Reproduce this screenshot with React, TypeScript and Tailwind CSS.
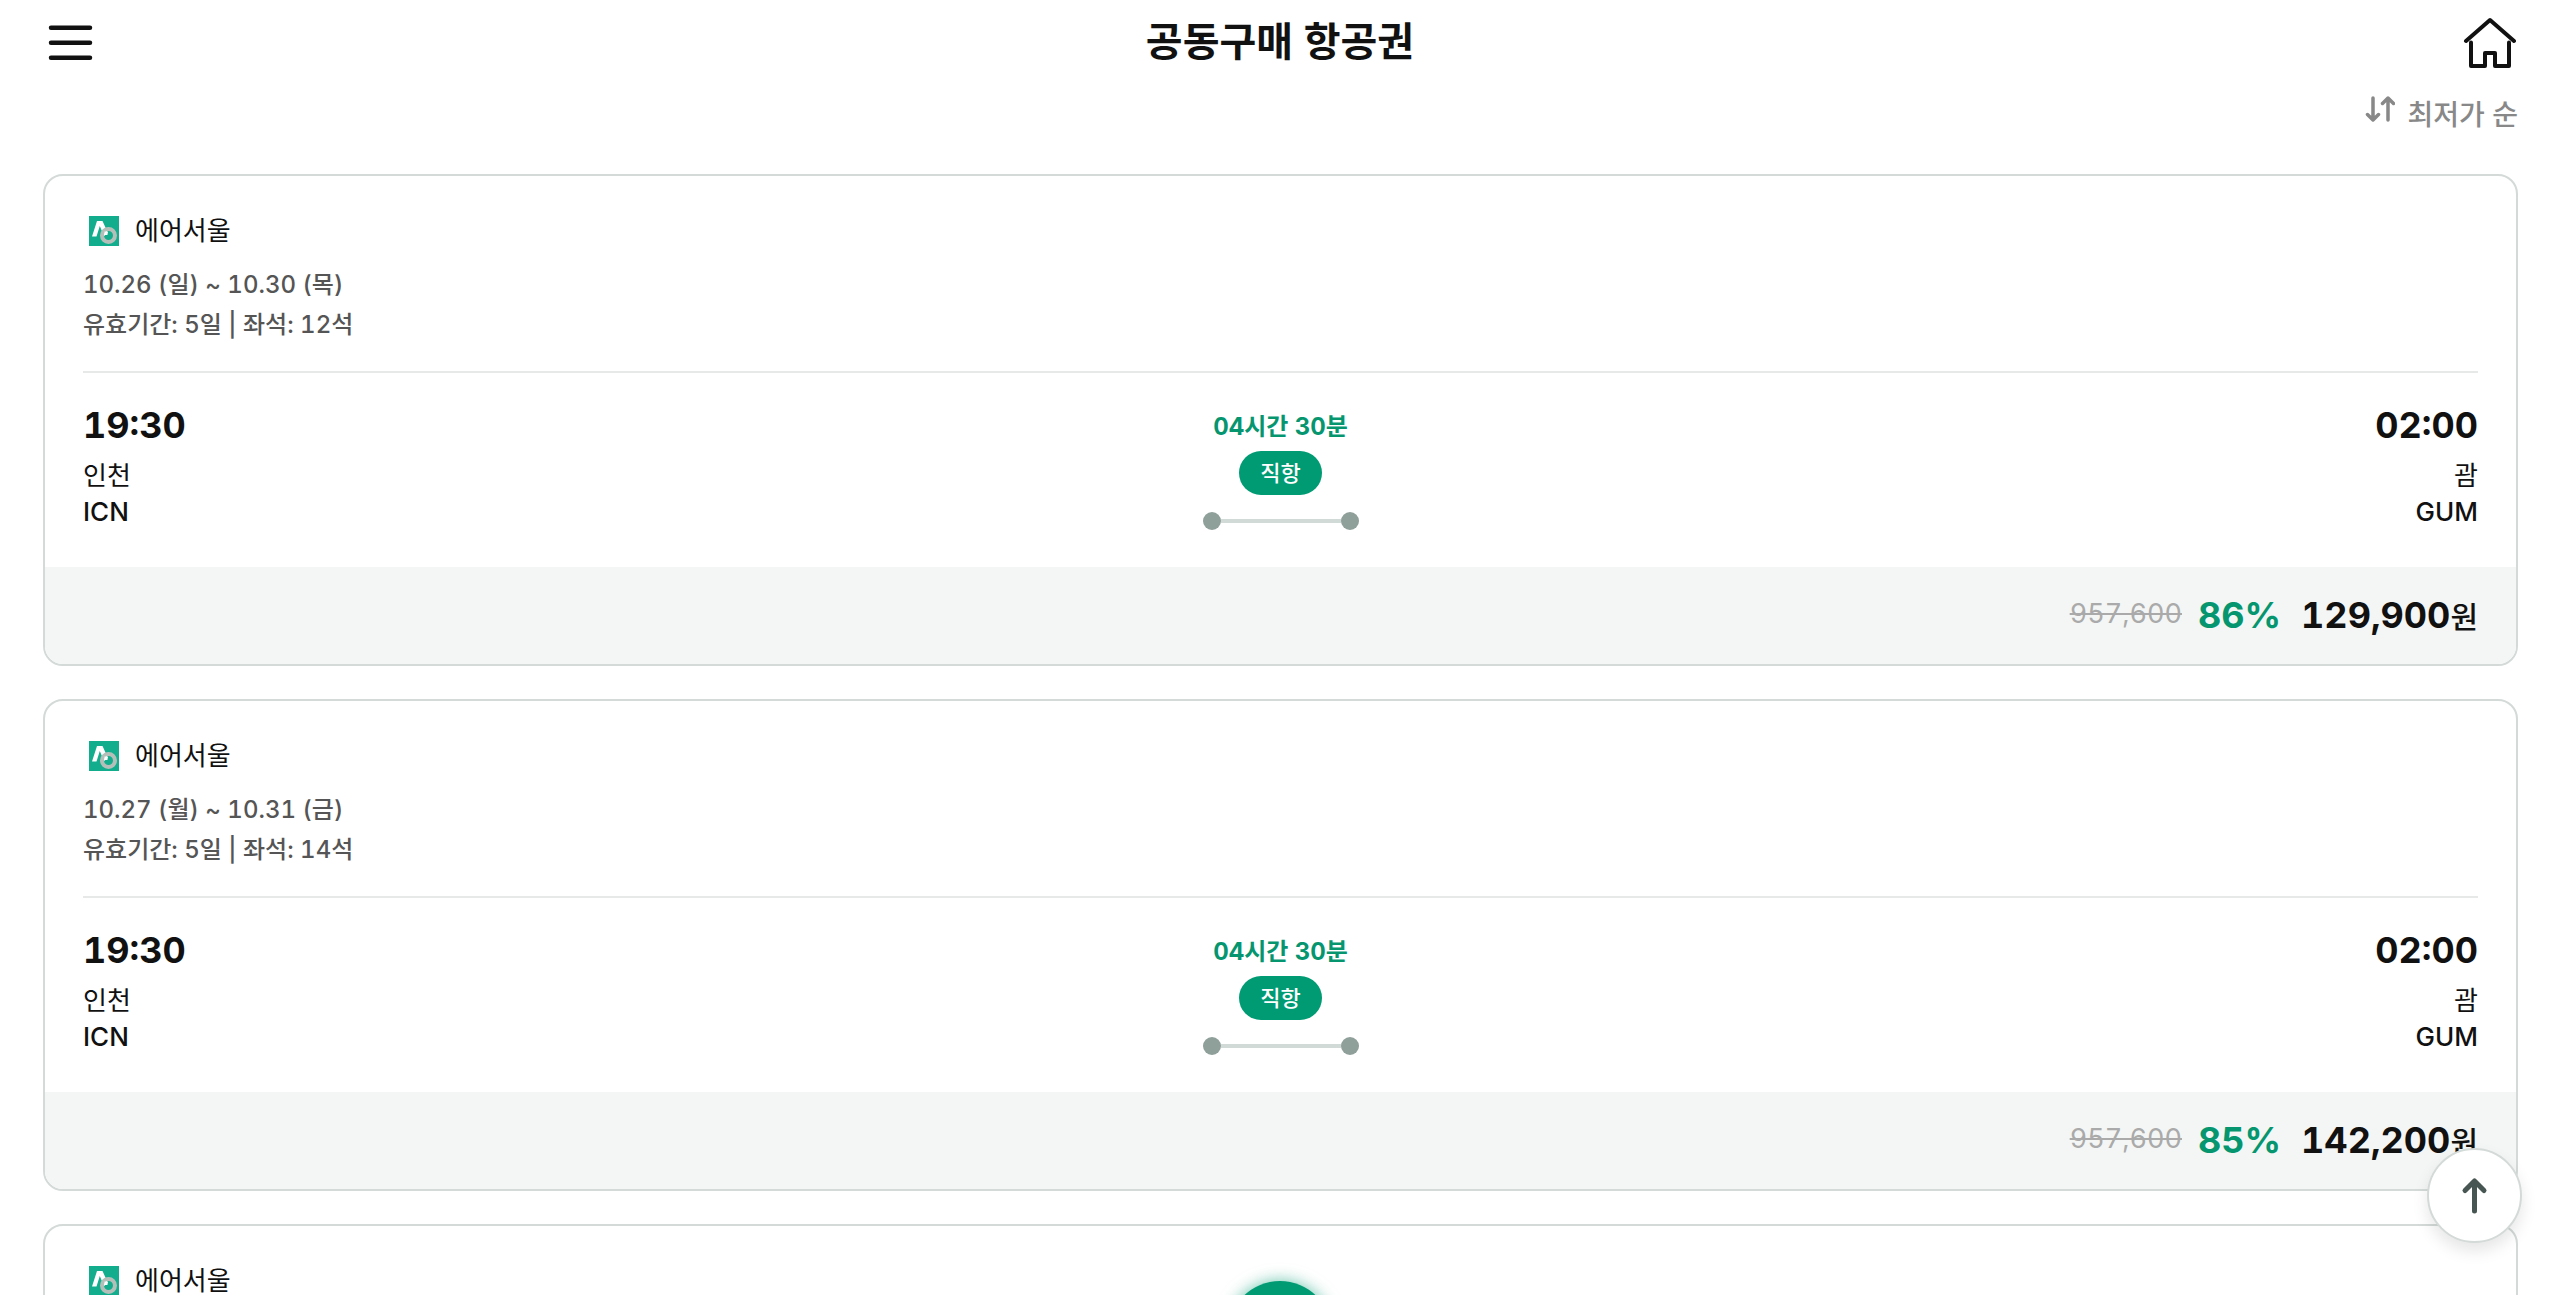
const flights = [
  {
    id: 1,
    airline: '에어서울',
    period: '10.26 (일) ~ 10.30 (목)',
    info: '유효기간: 5일 | 좌석: 12석',
    original: '957,600',
    rate: '86%',
    price: '129,900',
  },
  {
    id: 2,
    airline: '에어서울',
    period: '10.27 (월) ~ 10.31 (금)',
    info: '유효기간: 5일 | 좌석: 14석',
    original: '957,600',
    rate: '85%',
    price: '142,200',
  },
  {
    id: 3,
    airline: '에어서울',
    period: '10.28 (화) ~ 11.01 (토)',
    info: '유효기간: 5일 | 좌석: 14석',
    original: '957,600',
    rate: '85%',
    price: '142,200',
  },
]

type Flight = (typeof flights)[number]

function AirSeoulLogo() {
  return (
    <svg width="30" height="30" viewBox="0 0 30 30" aria-hidden="true">
      <rect width="30" height="30" fill="#12ad8d" />
      <path d="M3 20.500 8 5h5.500L19 17l-4 3-4.200-10L7.500 20.500z" fill="#fff" />
      <circle cx="19.500" cy="19.500" r="6.500" fill="none" stroke="#b4bfba" strokeWidth="4" />
      <path d="M15.500 15.500h3v3.500h-3z" fill="#fff" />
    </svg>
  )
}

function Header() {
  return (
    <header className="grid h-[84px] grid-cols-3 items-center px-11">
      <button aria-label="메뉴" className="justify-self-start">
        <svg width="54" height="54" viewBox="0 0 54 54" fill="none" stroke="#111" strokeWidth="4.500" strokeLinecap="round">
          <path d="M7 12.700h39M7 27.700h39M7 42.700h39" />
        </svg>
      </button>
      <h1 className="justify-self-center text-[40px] leading-none font-bold">공동구매 항공권</h1>
      <a href="#home" aria-label="홈" className="justify-self-end">
        <svg width="54" height="54" viewBox="0 0 54 54" fill="none" stroke="#111" strokeWidth="4" strokeLinecap="round" strokeLinejoin="round">
          <path d="M4 26 28 5 52 26" />
          <path d="M9 27.500V51H23V38h10v13h14V27.500" />
        </svg>
      </a>
    </header>
  )
}

function FlightCard({ flight }: { flight: Flight }) {
  return (
    <article className="overflow-hidden rounded-[20px] border-2 border-[#d3dad8] bg-white">
      <div className="px-[38px] pt-9 pb-[37px]">
        <div className="flex h-[38px] items-center gap-4 pl-[6px]">
          <AirSeoulLogo />
          <span className="text-[26px] leading-none">{flight.airline}</span>
        </div>
        <div className="mt-[15px] text-2xl leading-10 font-medium text-[#555]">
          <p>{flight.period}</p>
          <p>{flight.info}</p>
        </div>
        <div className="mt-[26px] flex items-start justify-between border-t-2 border-[#e6e9e8] pt-7">
          <div className="flex-1">
            <p className="text-4xl leading-[48px] font-bold">19:30</p>
            <p className="mt-[9px] text-[26px] leading-9">인천</p>
            <p className="text-[26px] leading-9 font-medium">ICN</p>
          </div>
          <div className="flex flex-col items-center pt-[2px]">
            <p className="text-2xl leading-[48px] font-bold text-[#05966f]">04시간 30분</p>
            <span className="flex h-11 items-center rounded-full bg-[#009b73] px-[21px] text-[22px] leading-none font-medium text-white">
              직항
            </span>
            <div className="mt-[17px] flex items-center">
              <span className="h-[18px] w-[18px] rounded-full bg-[#8f9f9a]" />
              <span className="h-1 w-[120px] bg-[#d1dad7]" />
              <span className="h-[18px] w-[18px] rounded-full bg-[#8f9f9a]" />
            </div>
          </div>
          <div className="flex-1 text-right">
            <p className="text-4xl leading-[48px] font-bold">02:00</p>
            <p className="mt-[9px] text-[26px] leading-9">괌</p>
            <p className="text-[26px] leading-9 font-medium">GUM</p>
          </div>
        </div>
      </div>
      <div className="flex h-[97px] items-center justify-end bg-[#f4f6f5] px-[38px] pb-[2px]">
        <del className="text-[27px] text-[#aaa]">{flight.original}</del>
        <span className="ml-4 text-4xl font-bold text-[#05966f]">{flight.rate}</span>
        <span className="ml-5 text-4xl font-bold">
          {flight.price}
          <span className="text-[30px] font-medium">원</span>
        </span>
      </div>
    </article>
  )
}

export default function App() {
  return (
    <div className="h-screen overflow-hidden bg-white font-[Inter,'Noto_Sans_CJK_KR',sans-serif] text-[#111] tabular-nums">
      <Header />
      <div className="flex h-[58px] items-start justify-end px-[42px] pt-[10px]">
        <button className="flex items-start gap-3 text-[28px] leading-[42px] font-medium text-[#888]">
          <svg width="30" height="30" viewBox="0 0 30 30" fill="none" stroke="#888" strokeWidth="3.500" strokeLinecap="round" strokeLinejoin="round">
            <path d="M8 4v22M2.500 20.500 8 26l5.500-5.500M23 26V4M17.500 9.500 23 4l5.500 5.500" />
          </svg>
          최저가 순
        </button>
      </div>
      <main className="mt-8 flex flex-col gap-[33px] pr-[42px] pl-[43px]">
        {flights.map((flight) => (
          <FlightCard key={flight.id} flight={flight} />
        ))}
      </main>
      <button
        aria-label="맨 위로"
        className="fixed right-[38px] bottom-[52px] flex h-[95px] w-[95px] items-center justify-center rounded-full border-2 border-[#d3dad8] bg-white shadow-[0_8px_16px_rgba(0,0,0,0.1)]"
      >
        <svg width="40" height="40" viewBox="0 0 40 40" fill="none" stroke="#475652" strokeWidth="5" strokeLinecap="round" strokeLinejoin="round">
          <path d="M19.500 35V5M10 14.500 19.500 5 29 14.500" />
        </svg>
      </button>
      <button
        aria-label="검색"
        className="fixed -bottom-[90px] left-1/2 h-[104px] w-[104px] -translate-x-1/2 rounded-full bg-[#009b73] shadow-[0_0_16px_rgba(0,155,115,0.6)]"
      />
    </div>
  )
}
